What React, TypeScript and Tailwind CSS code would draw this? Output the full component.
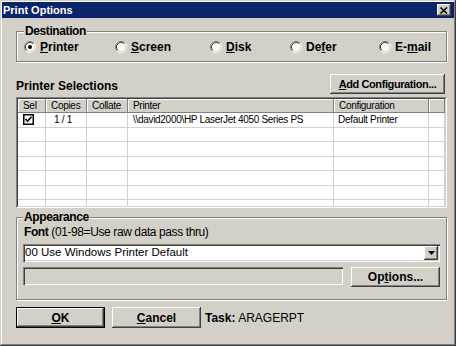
import React from "react";

const raised =
  "bg-[#d4d0c8] shadow-[inset_-1px_-1px_#404040,inset_1px_1px_#ffffff,inset_-2px_-2px_#808080]";
const sunken =
  "shadow-[inset_1px_1px_#808080,inset_2px_2px_#404040,inset_-1px_-1px_#ffffff,inset_-2px_-2px_#d4d0c8]";

function Radio({ checked }: { checked?: boolean }) {
  return (
    <svg width="12" height="12" viewBox="0 0 12 12" className="shrink-0">
      <circle cx="6" cy="6" r="4.5" fill="#fff" />
      <path d="M2.11 9.89 A5.5 5.5 0 0 1 9.89 2.11" stroke="#808080" fill="none" />
      <path d="M9.89 2.11 A5.5 5.5 0 0 1 2.11 9.89" stroke="#fff" fill="none" />
      <path d="M2.82 9.18 A4.5 4.5 0 0 1 9.18 2.82" stroke="#404040" fill="none" />
      <path d="M9.18 2.82 A4.5 4.5 0 0 1 2.82 9.18" stroke="#d4d0c8" fill="none" />
      {checked && <circle cx="6" cy="6" r="2" fill="#000" />}
    </svg>
  );
}

function Check() {
  return (
    <svg width="11" height="11" viewBox="0 0 11 11">
      <rect x="0.75" y="0.75" width="9.5" height="9.5" fill="#fff" stroke="#000" strokeWidth="1.5" />
      <path d="M2.5 5 L4.5 7.2 L8.5 2.8" stroke="#000" strokeWidth="1.6" fill="none" />
    </svg>
  );
}

const cols = [
  { label: "Sel", w: "w-[28px]" },
  { label: "Copies", w: "w-[41px]" },
  { label: "Collate", w: "w-[41px]" },
  { label: "Printer", w: "w-[206px]" },
  { label: "Configuration", w: "w-[95px]" },
  { label: "", w: "flex-1" },
];

const destinations = [
  { pre: "", key: "P", post: "rinter", w: "w-[91px]", checked: true },
  { pre: "", key: "S", post: "creen", w: "w-[95px]" },
  { pre: "", key: "D", post: "isk", w: "w-[80px]" },
  { pre: "De", key: "f", post: "er", w: "w-[89px]" },
  { pre: "E-", key: "m", post: "ail", w: "flex-1" },
];

function Row({ first }: { first?: boolean }) {
  return (
    <div className="flex h-[14.5px] border-b border-[#d0d0d0] shrink-0">
      {cols.map((c, i) => (
        <div
          key={i}
          className={`${c.w} h-full border-r border-[#d0d0d0] flex items-center text-[10px] tracking-[-0.3px] text-black whitespace-nowrap`}
        >
          {first && i === 0 && (
            <span className="pl-[5px] flex">
              <Check />
            </span>
          )}
          {first && i === 1 && <span className="pl-[8px]">1 / 1</span>}
          {first && i === 3 && <span className="pl-[5px]">\\david2000\HP LaserJet 4050 Series PS</span>}
          {first && i === 4 && <span className="pl-[4px]">Default Printer</span>}
        </div>
      ))}
    </div>
  );
}

export default function App() {
  return (
    <div className="w-[456px] h-[346px] bg-[#d4d0c8] font-['Liberation_Sans',Arial,sans-serif] text-black shadow-[inset_-1px_-1px_#404040,inset_1px_1px_#d4d0c8,inset_-2px_-2px_#808080,inset_2px_2px_#ffffff] overflow-hidden select-none">
      {/* title bar */}
      <div className="mx-[2px] mt-[2px] h-[16px] bg-[#0a246a] flex items-center justify-between pl-[1px] pr-[3px]">
        <span className="text-white text-[11px] font-bold leading-none">Print Options</span>
        <div className={`${raised} w-[14px] h-[12px] flex items-center justify-center`}>
          <svg width="8" height="7" viewBox="0 0 8 7">
            <path d="M0.5 0.5 L7 6.5 M7 0.5 L0.5 6.5" stroke="#000" strokeWidth="1.6" />
          </svg>
        </div>
      </div>

      <div className="ml-[16px] w-[431px] flex flex-col">
        {/* Destination */}
        <fieldset className="mt-[6px] border border-[#808080] shadow-[1px_1px_0_#ffffff,inset_1px_1px_0_#ffffff] pl-[7px] pr-[6px] pb-[7px]">
          <legend className="px-[1px] bg-[#d4d0c8] text-[12px] tracking-[-0.4px] font-bold leading-[14px]">Destination</legend>
          <div className="flex items-center h-[14px] mt-[2px]">
            {destinations.map((d) => (
              <div key={d.key} className={`${d.w} flex items-center gap-[4px]`}>
                <Radio checked={d.checked} />
                <span className="text-[12px] font-bold leading-[14px]">
                  {d.pre}
                  <u>{d.key}</u>
                  {d.post}
                </span>
              </div>
            ))}
          </div>
        </fieldset>

        {/* Printer selections header */}
        <div className="mt-[12px] h-[20px] flex items-end justify-between">
          <span className="text-[12px] font-bold leading-[14px] pb-[1px]">Printer Selections</span>
          <button className={`${raised} w-[115px] h-[20px] mr-[2px] text-[11px] tracking-[-0.4px] font-bold leading-none whitespace-nowrap`}>
            <u>A</u>dd Configuration...
          </button>
        </div>

        {/* table */}
        <div className="mt-[3px] h-[111px] border border-t-[#808080] border-l-[#808080] border-b-white border-r-white">
          <div className="h-full border border-t-[#404040] border-l-[#404040] border-b-[#d4d0c8] border-r-[#d4d0c8] bg-white flex flex-col overflow-hidden">
            <div className="flex h-[14px] shrink-0">
              {cols.map((c, i) => (
                <div
                  key={i}
                  className={`${c.w} h-full bg-[#d4d0c8] border-r border-b border-[#808080] shadow-[inset_1px_1px_#ffffff] flex items-center pl-[5px] text-[10px] tracking-[-0.3px] text-black`}
                >
                  {c.label}
                </div>
              ))}
            </div>
            <Row first />
            <Row />
            <Row />
            <Row />
            <Row />
            <Row />
            <Row />
          </div>
        </div>

        {/* Appearance */}
        <fieldset className="mt-[2px] border border-[#808080] shadow-[1px_1px_0_#ffffff,inset_1px_1px_0_#ffffff] pl-[6px] pr-[6px] pb-[12px]">
          <legend className="px-[1px] bg-[#d4d0c8] text-[12px] tracking-[-0.4px] font-bold leading-[14px]">Appearance</legend>
          <div className="pt-[1px] pl-[1px] h-[15px] text-[12px] tracking-[-0.4px] leading-[14px] whitespace-nowrap">
            <span className="font-bold">Font</span> (01-98=Use raw data pass thru)
          </div>
          <div className={`${sunken} mt-[5px] h-[18px] bg-white flex items-center justify-between pl-[2px] pr-[2px]`}>
            <span className="text-[11.5px] leading-none">00 Use Windows Printer Default</span>
            <div className={`${raised} w-[14px] h-[14px] flex items-center justify-center`}>
              <svg width="7" height="4" viewBox="0 0 7 4">
                <path d="M0 0 H7 L3.5 4 Z" fill="#000" />
              </svg>
            </div>
          </div>
          <div className="mt-[5px] h-[20px] flex items-start justify-between">
            <div className={`${sunken} w-[320px] h-[18px] bg-[#d4d0c8]`} />
            <button className={`${raised} w-[89px] h-[20px] text-[12px] font-bold leading-none whitespace-nowrap`}>
              Op<u>t</u>ions...
            </button>
          </div>
        </fieldset>

        {/* bottom buttons */}
        <div className="mt-[7px] flex items-center">
          <button className={`${raised} w-[89px] h-[21px] border border-black text-[12px] font-bold leading-none`}>
            <u>O</u>K
          </button>
          <button className={`${raised} ml-[7px] w-[89px] h-[21px] text-[12px] font-bold leading-none`}>
            <u>C</u>ancel
          </button>
          <span className="ml-[4px] text-[12px] leading-none whitespace-nowrap">
            <span className="font-bold">Task:</span> ARAGERPT
          </span>
        </div>
      </div>
    </div>
  );
}
